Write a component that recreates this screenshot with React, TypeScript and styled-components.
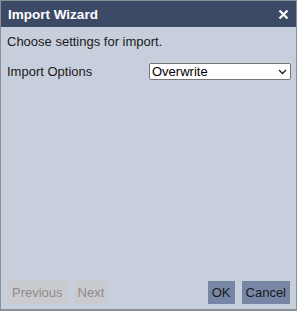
import React from "react";
import styled, { createGlobalStyle } from "styled-components";

const GlobalStyle = createGlobalStyle`
  html, body { margin: 0; padding: 0; }
  body { font-family: "Liberation Sans", Arial, sans-serif; }
`;

const Dialog = styled.div`
  box-sizing: border-box;
  width: 297px;
  height: 311px;
  border: 1px solid #8a8f98;
  border-bottom-width: 2px;
  background-color: #c8cfdc;
  display: flex;
  flex-direction: column;
`;

const TitleBar = styled.div`
  height: 26px;
  background-color: #3c4a66;
  color: #ffffff;
  display: flex;
  align-items: center;
  justify-content: space-between;
  padding: 0 6px 0 7px;
`;

const Title = styled.span`
  font-size: 13.5px;
  font-weight: bold;
`;

const CloseButton = styled.button`
  border: none;
  background: none;
  padding: 0;
  width: 14px;
  height: 14px;
  display: flex;
  align-items: center;
  justify-content: center;
  cursor: pointer;
`;

const Body = styled.div`
  flex: 1;
  display: flex;
  flex-direction: column;
  padding: 7px 5px 0 6px;
  font-size: 13px;
  color: #1a1a1a;
`;

const Intro = styled.div`
  margin-bottom: 14px;
`;

const OptionRow = styled.div`
  display: grid;
  grid-template-columns: 142px 1fr;
  align-items: center;
`;

const SelectWrap = styled.div`
  position: relative;
  display: flex;
`;

const Select = styled.select`
  appearance: none;
  flex: 1;
  font-family: "Liberation Sans", Arial, sans-serif;
  font-size: 13px;
  height: 17px;
  padding: 0 0 0 2px;
  border: 1px solid #767676;
  border-radius: 2px;
  background-color: #ffffff;
  color: #000;
`;

const Chevron = styled.svg`
  position: absolute;
  right: 4px;
  top: 6px;
  pointer-events: none;
`;

const Footer = styled.div`
  display: flex;
  align-items: center;
  padding: 0 6px 5px 7px;
  gap: 7px;
`;

const Spacer = styled.div`
  flex: 1;
`;

const Button = styled.button<{ $primary?: boolean }>`
  font-family: "Liberation Sans", Arial, sans-serif;
  font-size: 13px;
  height: 23px;
  padding: 0 4px;
  border: none;
  background-color: ${({ $primary }) => ($primary ? "#7886a6" : "#c9cbcf")};
  color: ${({ $primary }) => ($primary ? "#1a1a1a" : "#8c8c8c")};
`;

export default function App() {
  return (
    <>
      <GlobalStyle />
      <Dialog>
        <TitleBar>
          <Title>Import Wizard</Title>
          <CloseButton aria-label="Close">
            <svg width="11" height="11" viewBox="0 0 11 11">
              <path d="M1.5 1.5 L9.5 9.5 M9.5 1.5 L1.5 9.5" stroke="#fff" strokeWidth="2.2" />
            </svg>
          </CloseButton>
        </TitleBar>
        <Body>
          <Intro>Choose settings for import.</Intro>
          <OptionRow>
            <span>Import Options</span>
            <SelectWrap>
              <Select defaultValue="overwrite">
                <option value="overwrite">Overwrite</option>
                <option value="merge">Merge</option>
                <option value="skip">Skip</option>
              </Select>
              <Chevron width="9" height="6" viewBox="0 0 9 6">
                <path d="M1 1 L4.5 4.5 L8 1" fill="none" stroke="#222" strokeWidth="1.4" />
              </Chevron>
            </SelectWrap>
          </OptionRow>
        </Body>
        <Footer>
          <Button disabled>Previous</Button>
          <Button disabled>Next</Button>
          <Spacer />
          <Button $primary>OK</Button>
          <Button $primary>Cancel</Button>
        </Footer>
      </Dialog>
    </>
  );
}
